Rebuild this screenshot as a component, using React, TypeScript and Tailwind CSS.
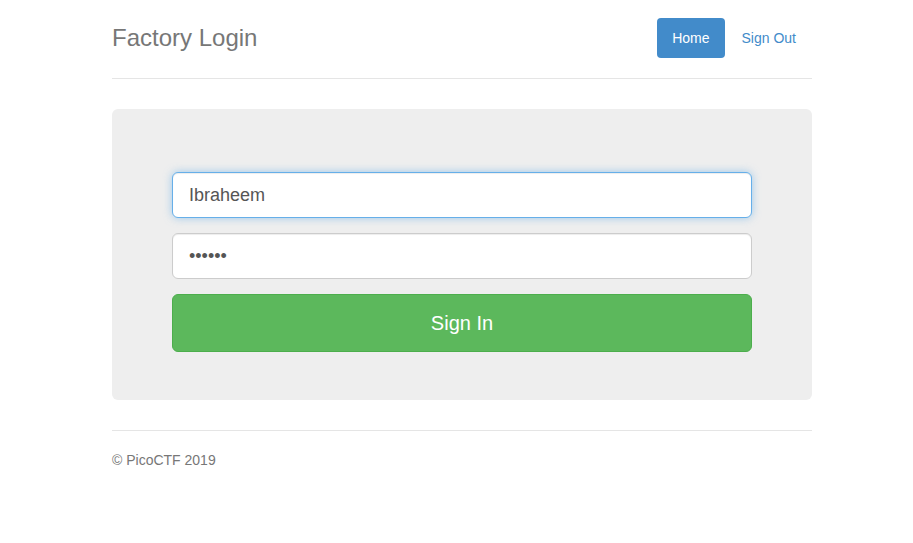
export default function App() {
  return (
    <div className="min-h-screen bg-white font-['Liberation_Sans',Arial,sans-serif] text-[14px] text-[#333]">
      <div className="ml-[112px] w-[700px]">
        {/* Header */}
        <div className="flex items-center justify-between border-b border-[#e5e5e5] pt-[18px] pb-[20px]">
          <h3 className="text-[24px] leading-[40px] text-[#777]">Factory Login</h3>
          <ul className="flex gap-[2px] pr-[1px]">
            <li>
              <a className="block rounded-[4px] bg-[#428bca] px-[15px] py-[10px] leading-[20px] text-white">Home</a>
            </li>
            <li>
              <a className="block rounded-[4px] px-[15px] py-[10px] leading-[20px] text-[#428bca]">Sign Out</a>
            </li>
          </ul>
        </div>

        {/* Jumbotron */}
        <div className="mt-[30px] rounded-[6px] bg-[#eee] px-[60px] pt-[63px] pb-[48px]">
          <form className="flex flex-col">
            <input
              type="text"
              defaultValue="Ibraheem"
              className="h-[46px] w-full rounded-[6px] border border-[#66afe9] bg-white px-[16px] text-[18px] text-[#555] shadow-[inset_0_1px_1px_rgba(0,0,0,0.075),0_0_8px_rgba(102,175,233,0.6)] outline-none"
            />
            <input
              type="password"
              defaultValue="123456"
              className="mt-[15px] h-[46px] w-full rounded-[6px] border border-[#ccc] bg-white px-[16px] text-[18px] text-[#555] shadow-[inset_0_1px_1px_rgba(0,0,0,0.075)] outline-none"
            />
            <button
              type="button"
              className="mt-[15px] h-[58px] w-full rounded-[6px] border border-[#4cae4c] bg-[#5cb85c] text-[20px] text-white"
            >
              Sign In
            </button>
          </form>
        </div>

        {/* Footer */}
        <div className="mt-[30px] border-t border-[#e5e5e5] pt-[19px] text-[#777]">
          <p className="leading-[20px]">© PicoCTF 2019</p>
        </div>
      </div>
    </div>
  );
}
